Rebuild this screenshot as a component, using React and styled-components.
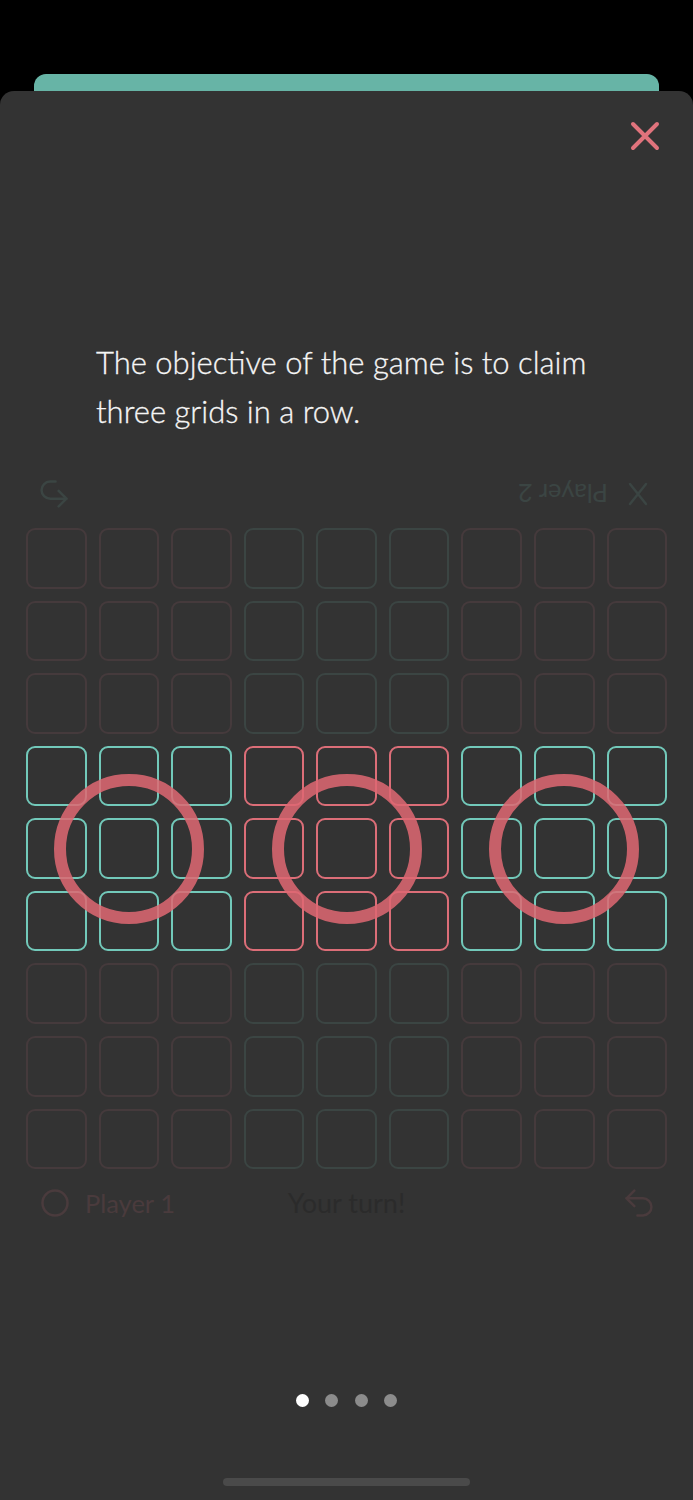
import React from 'react'
import styled, { createGlobalStyle } from 'styled-components'

const GlobalStyle = createGlobalStyle`
  html, body {
    margin: 0;
    padding: 0;
    background: #000;
  }
  body {
    font-family: Lato, "Open Sans", sans-serif;
  }
`

const TEAL = '#72c9ba'
const PINK = '#dc6e78'
const TEAL_DIM = '#3b4543'
const PINK_DIM = '#453a3c'

const Screen = styled.div`
  width: 693px;
  height: 1500px;
  padding-top: 74px;
  box-sizing: border-box;
  display: flex;
  flex-direction: column;
  overflow: hidden;
`

const BackCard = styled.div`
  height: 17px;
  margin: 0 34px;
  background: #67b4a6;
  border-radius: 12px 12px 0 0;
`

const Sheet = styled.div`
  flex: 1;
  background: #333333;
  border-radius: 14px 14px 0 0;
  display: flex;
  flex-direction: column;
  padding: 0 26px;
`

const TopRow = styled.div`
  display: flex;
  justify-content: flex-end;
  padding-top: 30px;
  padding-right: 7px;
`

const CloseButton = styled.button`
  width: 30px;
  height: 30px;
  padding: 0;
  border: none;
  background: none;
  display: flex;
`

const Intro = styled.p`
  margin: 187px 50px 0 70px;
  font-size: 31px;
  line-height: 49px;
  font-weight: 300;
  color: #f6f6f6;
  -webkit-text-stroke: 0.3px #f6f6f6;
`

const StatusBar = styled.div`
  height: 40px;
  display: flex;
  align-items: center;
  padding: 0 14px 0 15px;
  margin: ${p => (p.$flipped ? '38px 0 14px' : '14px 0 0')};
  transform: ${p => (p.$flipped ? 'rotate(180deg)' : 'none')};
  color: ${p => p.$color};
  position: relative;
`

const PlayerIcon = styled.span`
  width: 28px;
  height: 28px;
  display: flex;
  align-items: center;
  justify-content: center;
`

const PlayerName = styled.span`
  margin-left: 16px;
  font-size: 25.5px;
  line-height: 40px;
`

const TurnText = styled.span`
  position: absolute;
  left: 0;
  right: 0;
  text-align: center;
  font-size: 27px;
  line-height: 40px;
  color: #2b2b2b;
  pointer-events: none;
`

const UndoIcon = styled.span`
  margin-left: auto;
  width: 28px;
  height: 28px;
  display: flex;
`

const Board = styled.div`
  display: grid;
  grid-template-columns: repeat(3, 1fr);
  gap: 12px;
`

const Block = styled.div`
  position: relative;
  display: grid;
  grid-template-columns: repeat(3, 1fr);
  gap: 12px;
`

const Cell = styled.div`
  aspect-ratio: 1;
  box-sizing: border-box;
  border: 2px solid ${p => p.$color};
  border-radius: 9px;
`

const Ring = styled.div`
  position: absolute;
  left: 50%;
  top: 50%;
  width: 150px;
  height: 150px;
  margin: -75px 0 0 -75px;
  box-sizing: border-box;
  border: 12.5px solid rgba(222, 104, 114, 0.86);
  border-radius: 50%;
`

const Dots = styled.div`
  display: flex;
  justify-content: center;
  gap: 16.5px;
  margin-top: 171px;
`

const Dot = styled.span`
  width: 13px;
  height: 13px;
  border-radius: 50%;
  background: ${p => (p.$active ? '#ffffff' : '#8c8c8c')};
`

const HomeIndicator = styled.div`
  width: 247px;
  height: 8px;
  border-radius: 4px;
  background: #4a4a4a;
  margin: 71px auto 0;
`

const Undo = ({ color }) => (
  <svg width="28" height="28" viewBox="3 3 18 18" fill="none" stroke={color} strokeWidth="1.6" strokeLinecap="round" strokeLinejoin="round">
    <path d="M9 14 4 9l5-5" />
    <path d="M4 9h10.5a5.5 5.5 0 0 1 0 11H11" />
  </svg>
)

// claimed row in the middle: teal, pink, teal; the rest is faded
const blockColors = [
  PINK_DIM, TEAL_DIM, PINK_DIM,
  TEAL, PINK, TEAL,
  PINK_DIM, TEAL_DIM, PINK_DIM,
]

const App = () => (
  <>
    <GlobalStyle />
    <Screen>
      <BackCard />
      <Sheet>
        <TopRow>
          <CloseButton aria-label="close">
            <svg width="30" height="30" viewBox="0 0 30 30" fill="none" stroke="#e0737c" strokeWidth="4" strokeLinecap="round">
              <path d="M3 3l24 24M27 3L3 27" />
            </svg>
          </CloseButton>
        </TopRow>

        <Intro>The objective of the game is to claim three grids in a row.</Intro>

        <StatusBar $flipped $color={TEAL_DIM}>
          <PlayerIcon>
            <svg width="20" height="24" viewBox="0 0 20 24" fill="none" stroke={TEAL_DIM} strokeWidth="2.5" strokeLinecap="round">
              <path d="M2 2l16 20M18 2L2 22" />
            </svg>
          </PlayerIcon>
          <PlayerName>Player 2</PlayerName>
          <UndoIcon><Undo color={TEAL_DIM} /></UndoIcon>
        </StatusBar>

        <Board>
          {blockColors.map((color, b) => (
            <Block key={b}>
              {Array.from({ length: 9 }).map((_, i) => (
                <Cell key={i} $color={color} />
              ))}
              {b >= 3 && b <= 5 && <Ring />}
            </Block>
          ))}
        </Board>

        <StatusBar $color="#4a3b3d">
          <PlayerIcon>
            <svg width="28" height="28" viewBox="0 0 28 28" fill="none" stroke="#4a3b3d" strokeWidth="2.5">
              <circle cx="14" cy="14" r="12.5" />
            </svg>
          </PlayerIcon>
          <PlayerName>Player 1</PlayerName>
          <TurnText>Your turn!</TurnText>
          <UndoIcon><Undo color="#4a3b3d" /></UndoIcon>
        </StatusBar>

        <Dots>
          <Dot $active />
          <Dot />
          <Dot />
          <Dot />
        </Dots>

        <HomeIndicator />
      </Sheet>
    </Screen>
  </>
)

export default App
